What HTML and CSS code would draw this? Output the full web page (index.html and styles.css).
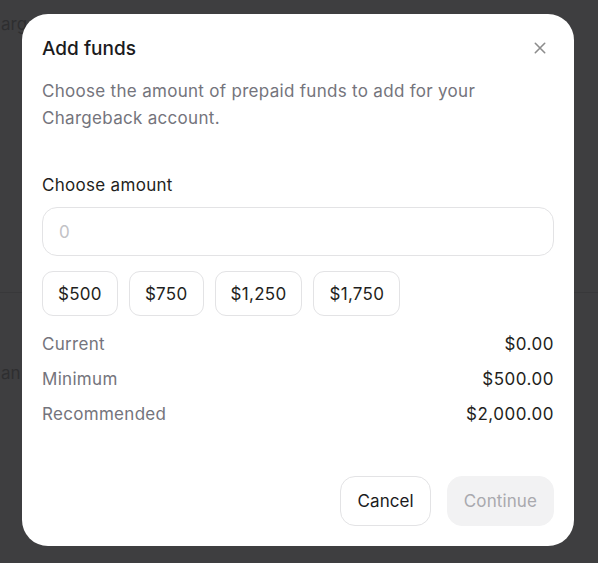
FILE: index.html
```html
<!DOCTYPE html>
<html>
<head>
<meta charset="utf-8">
<link rel="stylesheet" href="styles.css">
</head>
<body>
<div class="backdrop">
  <div class="bg-page">
    <div class="bg-text bg-top">arg</div>
    <div class="bg-line"></div>
    <div class="bg-text bg-mid">an</div>
  </div>
  <div class="modal">
    <div class="modal-header">
      <h1 class="title">Add funds</h1>
      <button class="close" aria-label="Close">
        <svg width="12" height="12" viewBox="0 0 12 12"><path d="M1.3 1.3L10.7 10.7M10.7 1.3L1.3 10.7" stroke="#8c8c8c" stroke-width="1.6" stroke-linecap="round"/></svg>
      </button>
    </div>
    <p class="desc">Choose the amount of prepaid funds to add for your Chargeback account.</p>
    <label class="label">Choose amount</label>
    <div class="input">0</div>
    <div class="chips">
      <button class="chip">$500</button>
      <button class="chip">$750</button>
      <button class="chip">$1,250</button>
      <button class="chip">$1,750</button>
    </div>
    <div class="rows">
      <div class="row"><span class="row-label">Current</span><span class="row-value">$0.00</span></div>
      <div class="row"><span class="row-label">Minimum</span><span class="row-value">$500.00</span></div>
      <div class="row"><span class="row-label">Recommended</span><span class="row-value">$2,000.00</span></div>
    </div>
    <div class="footer">
      <button class="btn btn-cancel">Cancel</button>
      <button class="btn btn-continue">Continue</button>
    </div>
  </div>
</div>
</body>
</html>
```
FILE: styles.css
```css
* { box-sizing: border-box; }
html, body { margin: 0; padding: 0; }
body {
  width: 598px;
  height: 563px;
  overflow: hidden;
  font-family: Inter, "Noto Sans", sans-serif;
  background: #3e3e40;
}
.backdrop {
  position: relative;
  width: 598px;
  height: 563px;
  padding: 14px 24px 17px 22px;
}
.bg-page {
  position: absolute;
  inset: 0;
  background: #3e3e40;
}
.bg-text {
  position: absolute;
  left: 1px;
  font-size: 17px;
  color: #2e2e30;
}
.bg-top { top: 14px; }
.bg-mid { top: 363px; }
.bg-line {
  position: absolute;
  left: 0;
  right: 0;
  top: 292px;
  height: 1px;
  background: #38383a;
}
.modal {
  position: relative;
  width: 552px;
  height: 532px;
  background: #ffffff;
  border-radius: 26px;
  padding: 20px 20px 20px 20px;
  display: flex;
  flex-direction: column;
  letter-spacing: 0.3px;
}
.modal-header {
  display: flex;
  align-items: center;
  justify-content: space-between;
  height: 28px;
}
.title {
  margin: 0;
  font-size: 19px;
  font-weight: 500;
  color: #1b1b1d;
  letter-spacing: 0;
}
.close {
  width: 28px;
  height: 28px;
  border: 0;
  background: none;
  padding: 0;
  display: flex;
  align-items: center;
  justify-content: center;
}
.desc {
  margin: 16px 0 0;
  font-size: 17px;
  line-height: 27px;
  color: #74747c;
}
.label {
  margin-top: 41px;
  font-size: 17px;
  line-height: 24px;
  color: #1f1f21;
}
.input {
  margin-top: 10px;
  height: 49px;
  border: 1px solid #e3e3e5;
  border-radius: 15px;
  padding: 0 16px;
  display: flex;
  align-items: center;
  font-size: 17px;
  color: #c2c2c6;
}
.chips {
  margin-top: 15px;
  display: flex;
  gap: 11px;
}
.chip {
  height: 45px;
  padding: 0 15px;
  border: 1px solid #e3e3e5;
  border-radius: 11px;
  background: #fff;
  font-family: inherit;
  font-size: 17px;
  letter-spacing: 0.3px;
  color: #1f1f21;
}
.rows {
  margin-top: 16px;
  display: flex;
  flex-direction: column;
  gap: 11px;
}
.row {
  display: flex;
  justify-content: space-between;
  font-size: 17px;
  line-height: 24px;
}
.row-label { color: #74747c; }
.row-value { color: #1f1f21; letter-spacing: 0.5px; }
.footer {
  margin-top: auto;
  display: flex;
  justify-content: flex-end;
  gap: 16px;
}
.btn {
  height: 50px;
  border-radius: 15px;
  font-family: inherit;
  font-size: 17px;
  letter-spacing: 0.1px;
  padding: 0 16px;
}
.btn-cancel {
  background: #fff;
  border: 1px solid #e3e3e5;
  color: #1b1b1d;
}
.btn-continue {
  background: #f2f2f3;
  border: 1px solid #f2f2f3;
  color: #a9a9ae;
}
```
